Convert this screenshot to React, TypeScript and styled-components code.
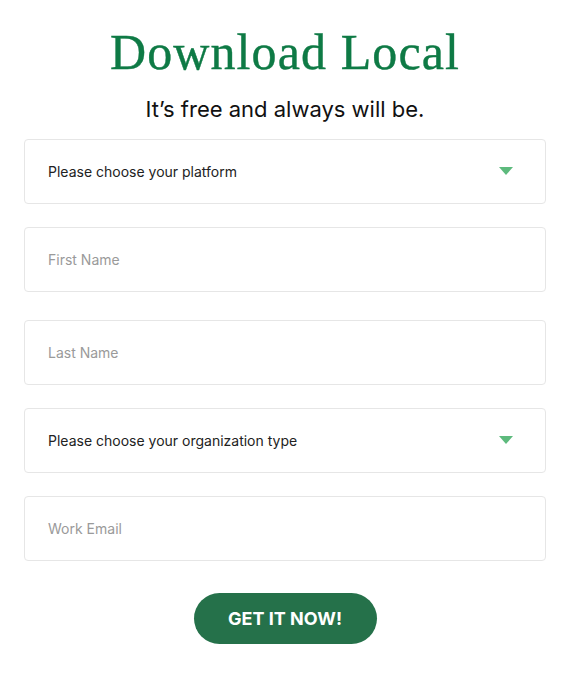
import React from "react";
import styled, { createGlobalStyle } from "styled-components";

const Global = createGlobalStyle`
  html, body { margin: 0; padding: 0; background: #fff; }
  body { font-family: Inter, "Noto Sans", sans-serif; }
  * { box-sizing: border-box; }
`;

const Page = styled.div`
  width: 568px;
  padding: 22px 22px 0 24px;
  display: flex;
  flex-direction: column;
  align-items: stretch;
`;

const Title = styled.h1`
  margin: 0;
  text-align: center;
  font-family: "Liberation Serif", serif;
  font-weight: 400;
  font-size: 50px;
  letter-spacing: 1.1px;
  line-height: 60px;
  color: #0e7a45;
  -webkit-text-stroke: 0.4px #0e7a45;
`;

const Subtitle = styled.p`
  margin: 12px 0 15px;
  text-align: center;
  font-family: Inter, sans-serif;
  font-size: 22px;
  line-height: 30px;
  color: #111;
`;

const Form = styled.form`
  display: flex;
  flex-direction: column;
`;

const Field = styled.div<{ $gap: number }>`
  height: 65px;
  margin-bottom: ${(p) => p.$gap}px;
  border: 1px solid #e6e6e6;
  border-radius: 4px;
  display: flex;
  align-items: center;
  justify-content: space-between;
  padding: 0 32px 0 23px;
  font-size: 14px;
`;

const Label = styled.span<{ $placeholder?: boolean }>`
  color: ${(p) => (p.$placeholder ? "#9a9a9a" : "#222")};
`;

const Caret = styled.span`
  width: 0;
  height: 0;
  border-left: 7px solid transparent;
  border-right: 7px solid transparent;
  border-top: 8px solid #5dba7d;
  margin-top: -2px;
`;

const ButtonRow = styled.div`
  display: flex;
  justify-content: center;
  padding-top: 9px;
`;

const Button = styled.button`
  width: 183px;
  height: 51px;
  border: none;
  border-radius: 26px;
  background: #25714a;
  color: #fff;
  font-family: Inter, sans-serif;
  font-weight: 700;
  font-size: 18px;
  letter-spacing: 0;
  cursor: pointer;
`;

const fields: { label: string; select?: boolean; gap: number }[] = [
  { label: "Please choose your platform", select: true, gap: 23 },
  { label: "First Name", gap: 28 },
  { label: "Last Name", gap: 23 },
  { label: "Please choose your organization type", select: true, gap: 23 },
  { label: "Work Email", gap: 23 },
];

export default function App() {
  return (
    <>
      <Global />
      <Page>
        <Title>Download Local</Title>
        <Subtitle>It’s free and always will be.</Subtitle>
        <Form onSubmit={(e) => e.preventDefault()}>
          {fields.map((f) => (
            <Field key={f.label} $gap={f.gap}>
              <Label $placeholder={!f.select}>{f.label}</Label>
              {f.select && <Caret />}
            </Field>
          ))}
          <ButtonRow>
            <Button type="submit">GET IT NOW!</Button>
          </ButtonRow>
        </Form>
      </Page>
    </>
  );
}
